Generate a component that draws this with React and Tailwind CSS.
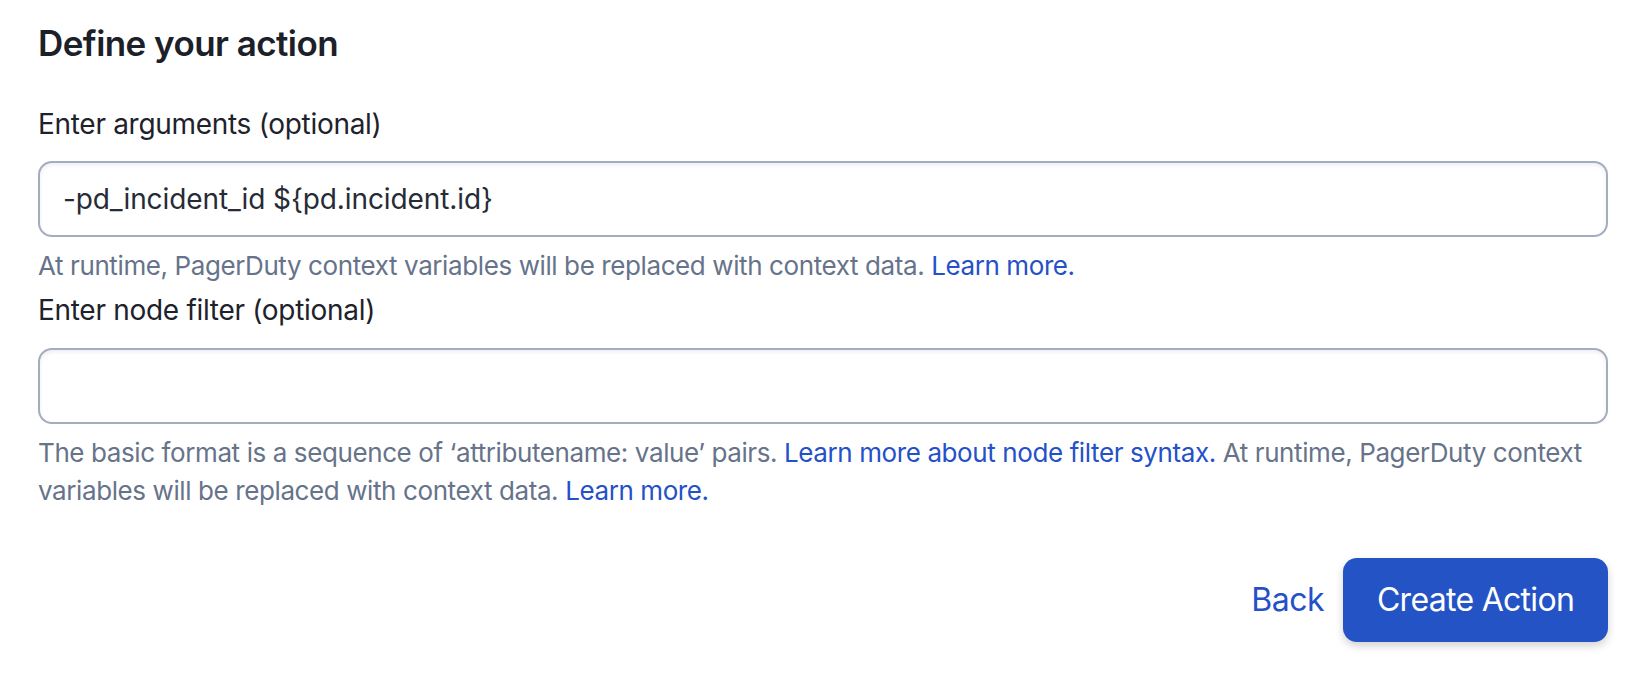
import React from "react";

export default function App() {
  return (
    <div
      className="w-[1648px] h-[674px] bg-white pl-[38px] pr-[40px] pt-[21px] text-[#1e222b]"
      style={{ fontFamily: "Inter, 'Noto Sans', sans-serif" }}
    >
      <h1 className="text-[35px] leading-[44px] font-semibold text-[#1c2029] tracking-[-0.55px]">
        Define your action
      </h1>

      <label className="block mt-[41px] text-[28px] leading-[36px] tracking-[-0.3px]">
        Enter arguments (optional)
      </label>
      <div className="mt-[19px] h-[76px] rounded-[14px] border-2 border-[#a3adbf] shadow-[inset_0_2px_4px_rgba(0,0,0,0.07)] flex items-center px-[23px] text-[28px] text-[#262b36] tracking-[-0.1px]">
        -pd_incident_id ${"{"}pd.incident.id{"}"}
      </div>
      <p className="mt-[10px] text-[26px] leading-[38px] text-[#66738a] tracking-[-0.4px]">
        At runtime, PagerDuty context variables will be replaced with context data.{" "}
        <a className="text-[#2450c8]">Learn more.</a>
      </p>

      <label className="block mt-[7px] text-[28px] leading-[36px] tracking-[-0.3px]">
        Enter node filter (optional)
      </label>
      <div className="mt-[20px] h-[76px] rounded-[14px] border-2 border-[#a3adbf] shadow-[inset_0_2px_4px_rgba(0,0,0,0.07)]" />
      <p className="mt-[10px] text-[26px] leading-[38px] text-[#66738a] tracking-[-0.4px]">
        The basic format is a sequence of ‘attributename: value’ pairs.{" "}
        <a className="text-[#2450c8]">Learn more about node filter syntax.</a> At runtime,
        PagerDuty context variables will be replaced with context data.{" "}
        <a className="text-[#2450c8]">Learn more.</a>
      </p>

      <div className="mt-[48px] flex justify-end items-center gap-[19px]">
        <a className="text-[32px] text-[#2450c8] tracking-[-0.5px]">Back</a>
        <button className="h-[84px] w-[265px] rounded-[14px] bg-[#2453c5] text-white text-[32px] tracking-[-0.7px] shadow-[0_4px_8px_rgba(0,0,0,0.18)]">
          Create Action
        </button>
      </div>
    </div>
  );
}
